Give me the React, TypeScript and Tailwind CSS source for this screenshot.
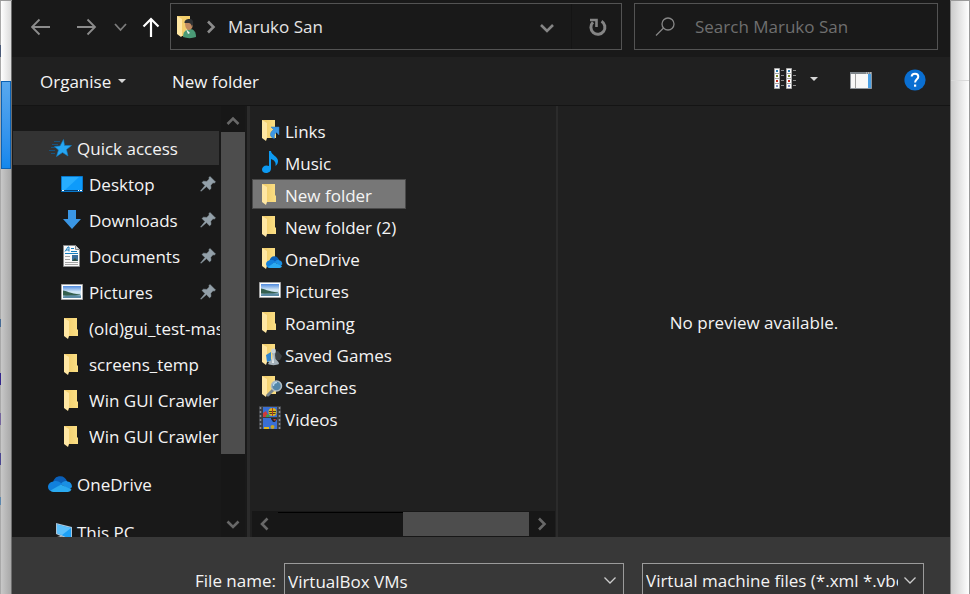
import { useId, type ReactNode } from "react";

const FONT = "font-['Open_Sans','Noto_Sans',sans-serif]";

function Glyph({ children }: { children: ReactNode }) {
  return (
    <svg viewBox="0 0 24 24" className="h-6 w-6 shrink-0 overflow-visible" aria-hidden="true">
      {children}
    </svg>
  );
}

function FolderShape() {
  const id = useId();
  return (
    <>
      <defs>
        <linearGradient id={id} x1="0" y1="0" x2="1" y2="0">
          <stop offset="0" stopColor="#f0cb68" />
          <stop offset="1" stopColor="#fbdf85" />
        </linearGradient>
      </defs>
      <path d="M4 2h13v11l1 1v6H7z" fill={`url(#${id})`} />
      <path d="M4 2l5 3v15l-1 3-4-3z" fill="#ffe7a3" />
    </>
  );
}

function CloudShape() {
  return (
    <>
      <path d="M5 10.500C6 6 9 4 12.500 4.200c3 0 5.500 2 6.500 5L13 14z" fill="#0a5fb8" />
      <path d="M5.500 9.500c3-1 6 0 8.500 2.500L4 19.500a5 5 0 0 1-4-4.500c0-3 2.500-5.300 5.500-5.500z" fill="#1180dc" />
      <path d="M13 12c2-3 5-3.500 6.500-2.500 3 .3 4.500 2.500 4.500 5.500l-3 3z" fill="#1a8fe3" />
      <path d="M2.500 18.500L13 12.500l10.500 5A4 4 0 0 1 20 20H5.500c-1 0-2-.5-3-1.500z" fill="#2aaaf0" />
    </>
  );
}

const StarIcon = () => (
  <Glyph>
    <path d="M6 5.500h6M4 8.500h6M3 11.500h6M1 14.500h6M3 17.500h4" stroke="#17527c" strokeWidth="1" />
    <path d="M15.500 3.500l1 6h7l-5 4 1.500 6.500-5.500-3.500-6 4 2-6.500-4-3.500 5.500-.5z" fill="#27a6f2" stroke="#0f7fc8" strokeWidth=".6" />
  </Glyph>
);
const DesktopIcon = () => (
  <Glyph>
    <path d="M1.500 4.500h21v15h-21z" fill="#0e9bfb" stroke="#0878cc" />
    <path d="M2 5h17L5 18H2z" fill="#27adff" />
    <path d="M1 18.500h22" stroke="#053f70" />
    <path d="M2 18.500h2M18 18.500h1M20 18.500h2" stroke="#fff" />
  </Glyph>
);
const DownloadIcon = () => (
  <Glyph>
    <path d="M8 2h8v9h5l-9 10-9-10h5z" fill="#3a96e4" />
  </Glyph>
);
const DocumentIcon = () => (
  <Glyph>
    <path d="M3.500 1.500h12l4 4v17h-16z" fill="#fafafa" stroke="#8a8a8a" />
    <path d="M15.500 1.500v4h4" fill="#ddd" stroke="#8a8a8a" />
    <path d="M5 7.500l3-4.500h1v4.500M6 6h3M11 4.500h3M11 7.500h6M5 9.500h13" stroke="#187fc0" fill="none" />
    <path d="M5 12.500h5M5 15.500h5M5 18.500h13M5 20.500h13" stroke="#a4a4a4" />
    <path d="M12 11h6v6h-6z" fill="#3b6f9c" />
    <path d="M12 17l3-3 3 3z" fill="#2f5244" />
  </Glyph>
);

function PictureIcon() {
  const id = useId();
  return (
    <Glyph>
      <defs>
        <linearGradient id={id} x1="0" y1="0" x2="0" y2="1">
          <stop offset="0" stopColor="#4f8ade" />
          <stop offset=".5" stopColor="#d9ecf8" />
          <stop offset="1" stopColor="#8fb6cc" />
        </linearGradient>
      </defs>
      <path d="M1.500 4.500h21v15h-21z" fill="#fff" stroke="#a5a5a5" />
      <path d="M3 6h18v12H3z" fill={`url(#${id})`} />
      <path d="M3 10.500c3 0 7 3 17 4v.5c-6 1-11 1-17 .5z" fill="#35604f" />
      <path d="M3 16.500c6-1.500 12-1 18-1V18H3z" fill="#5a8aa4" />
    </Glyph>
  );
}

const FolderIcon = () => (
  <Glyph>
    <FolderShape />
  </Glyph>
);
const CloudIcon = () => (
  <Glyph>
    <CloudShape />
  </Glyph>
);
const PcIcon = () => (
  <Glyph>
    <path d="M8 3l16 4v14L8 14z" fill="#a9c4d8" />
    <path d="M9 4.500l14 3.500v11.500L9 13z" fill="#1da0f6" />
    <path d="M9 4.500l14 3.500-9 7-5-2z" fill="#5cc0fb" />
    <path d="M5 18l8-2 7 4-8 2z" fill="#c4c8ca" />
  </Glyph>
);
const LinksIcon = () => (
  <Glyph>
    <FolderShape />
    <path d="M13 9h8v8l-2.500-2.500c-2 1-2.500 3-2 6-1-.2-3.500-1-4-3-.5-2.500 1-4.500 3-6z" fill="#3c97e4" stroke="#2a79c4" strokeWidth=".5" />
  </Glyph>
);
const MusicIcon = () => (
  <Glyph>
    <path d="M11 1h2c0 4 7 5 7 10 0 2-1 4-2.500 5 .8-4-1.500-6-4.500-7v9.500c0 3-2.500 4.500-5 4.500S4 21.500 4 19.500s2-4 4.500-4c1 0 2 .2 2.500.5z" fill="#0d9af2" />
  </Glyph>
);
const OneDriveFolderIcon = () => (
  <Glyph>
    <FolderShape />
    <g transform="translate(8 7) scale(.68 .75)">
      <CloudShape />
    </g>
  </Glyph>
);
const GamesIcon = () => (
  <Glyph>
    <FolderShape />
    <path d="M8 13l5-3v9l-4 1z" fill="#2f86d0" />
    <path d="M16 10l4-1 4 5-2 4-5 1z" fill="#3c4043" />
    <path d="M10 22l1-2 3-3 .5-4-1-3.500h4l-.5 3.500.5 4 3 3 .5 2c-3 1.500-8 1.500-11 0z" fill="#a3b0b9" />
    <circle cx="15.500" cy="9" r="2.400" fill="#c9d3d9" />
    <path d="M15 12l-1 9h2z" fill="#e4eaee" />
  </Glyph>
);
const SearchFolderIcon = () => (
  <Glyph>
    <FolderShape />
    <path d="M15 16l-5 5" stroke="#75828c" strokeWidth="3" strokeLinecap="round" />
    <circle cx="18.500" cy="12" r="5" fill="#5587a8" stroke="#aebac2" strokeWidth="1.500" />
    <path d="M15.500 12a3 3 0 0 1 3.500-3.500" stroke="#b9d9ee" fill="none" strokeWidth="1.500" />
  </Glyph>
);
const VideoIcon = () => (
  <Glyph>
    <path d="M1 0h22v23H1z" fill="#3c3e42" />
    <path d="M2.500 1v22M21.500 1v22" stroke="#8b8e92" strokeWidth="1.500" strokeDasharray="2 2" />
    <path d="M5 1h14v10H5zM5 12h14v11H5z" fill="#3a6fd4" />
    <path d="M5 7l3-2 3 6H5z" fill="#cf3b3b" />
    <path d="M8 9l4-1-1 3H8z" fill="#3f9a4c" />
    <circle cx="14.500" cy="6" r="4" fill="#dcb51e" />
    <path d="M11 5.500h7M11.500 7.500h6" stroke="#4a4020" />
    <path d="M14.500 2v8" stroke="#b23a20" />
    <path d="M13 12h6v1l-2 3h-2l-2-3z" fill="#26262a" />
    <path d="M15 13h3l-1 2z" fill="#d6382a" />
    <path d="M6 21h5v2H6z" fill="#e2b81c" />
    <circle cx="14.500" cy="21" r="2" fill="#c9a623" />
  </Glyph>
);
const UserFolderIcon = () => (
  <Glyph>
    <path d="M2 1h13v20H6z" fill="#f3ce6c" />
    <path d="M2 1l5 3v17l-1 1-4-3z" fill="#ffe7a3" />
    <path d="M8 22c0-5 3-8 7-8s6 3 6 8c-4 1.500-9 1.500-13 0z" fill="#4a9a76" />
    <path d="M11 14l4 4-2 1z" fill="#eef2ee" />
    <path d="M10 7c0 5 1 7.500 4 8 3-.5 4-3 4-7z" fill="#c08a60" />
    <path d="M9.500 8c0-3 2-4 5-4 3 0 4 2 3.500 5.500L17 12c-.5-2-1-3.500-3-4z" fill="#2f3133" />
  </Glyph>
);

const PinIcon = () => (
  <svg viewBox="0 0 16 16" className="h-4 w-4 shrink-0" aria-label="Pinned">
    <path d="M10 .5L15.500 6l-1.200 1-1.300-.2-2.300 2.400.3 3.300-1.500 1.300-3-3.200L1 15.300.6 15l4.400-5.500-3-3 1.500-1.300 3.300.2L9.200 3 9 1.500z" fill="#93a0a9" stroke="#93a0a9" strokeWidth=".5" />
  </svg>
);

function Chevron({ dir, thin = false }: { dir: "up" | "down" | "left" | "right"; thin?: boolean }) {
  const d = {
    up: "M2.500 11L8 5.500 13.500 11",
    down: "M2.500 5.500L8 11l5.500-5.500",
    left: "M10.500 2.500L5 8l5.500 5.500",
    right: "M5 2.500L10.500 8 5 13.500",
  }[dir];
  return (
    <svg viewBox="0 0 16 16" className="h-4 w-4 shrink-0" aria-hidden="true">
      <path d={d} fill="none" stroke="currentColor" strokeWidth={thin ? 1.3 : 2.6} />
    </svg>
  );
}

const pinned = [
  { name: "Desktop", icon: <DesktopIcon />, pin: true },
  { name: "Downloads", icon: <DownloadIcon />, pin: true },
  { name: "Documents", icon: <DocumentIcon />, pin: true },
  { name: "Pictures", icon: <PictureIcon />, pin: true },
  { name: "(old)gui_test-master", icon: <FolderIcon />, pin: false },
  { name: "screens_temp", icon: <FolderIcon />, pin: false },
  { name: "Win GUI Crawler", icon: <FolderIcon />, pin: false },
  { name: "Win GUI Crawler", icon: <FolderIcon />, pin: false },
];

const files = [
  { name: "Links", icon: <LinksIcon /> },
  { name: "Music", icon: <MusicIcon /> },
  { name: "New folder", icon: <FolderIcon />, selected: true },
  { name: "New folder (2)", icon: <FolderIcon /> },
  { name: "OneDrive", icon: <OneDriveFolderIcon /> },
  { name: "Pictures", icon: <PictureIcon /> },
  { name: "Roaming", icon: <FolderIcon /> },
  { name: "Saved Games", icon: <GamesIcon /> },
  { name: "Searches", icon: <SearchFolderIcon /> },
  { name: "Videos", icon: <VideoIcon /> },
];

function NavigationBar() {
  const navButton = "flex h-[46px] items-center justify-center";
  return (
    <header className="flex h-[57px] shrink-0 items-start bg-[#191919] pt-[3px] pr-3 pl-[6px]">
      <button type="button" aria-label="Back" className={`${navButton} w-[46px] text-[#8c8c8c]`}>
        <svg viewBox="0 0 20 20" className="h-5 w-5"><path d="M19 11H1M8.500 3.500L1 11l7.500 7.500" fill="none" stroke="currentColor" strokeWidth="1.800" /></svg>
      </button>
      <button type="button" aria-label="Forward" className={`${navButton} w-[46px] text-[#8c8c8c]`}>
        <svg viewBox="0 0 20 20" className="h-5 w-5"><path d="M0 11h18M10.500 3.500L18 11l-7.500 7.500" fill="none" stroke="currentColor" strokeWidth="1.800" /></svg>
      </button>
      <button type="button" aria-label="Recent locations" className={`${navButton} w-[22px] text-[#7c7c7c]`}>
        <svg viewBox="0 0 16 16" className="h-4 w-4"><path d="M2 6l5.500 6L13 6" fill="none" stroke="currentColor" strokeWidth="1.800" /></svg>
      </button>
      <button type="button" aria-label="Up" className={`${navButton} w-[38px] text-white`}>
        <svg viewBox="0 0 20 22" className="h-[22px] w-5"><path d="M10 22V4M2.500 11.500L10 4l7.500 7.500" fill="none" stroke="currentColor" strokeWidth="2.200" /></svg>
      </button>
      <div className="flex h-[47px] min-w-0 flex-1 items-center border border-[#535353] text-[#e4e4e4]">
        <span className="pl-1"><UserFolderIcon /></span>
        <span className="pl-1 text-[#8c8c8c]"><Chevron dir="right" /></span>
        <button type="button" className="pl-[9px] text-[17px] leading-6">Maruko San</button>
        <button type="button" aria-label="Previous locations" className="ml-auto flex h-full w-[50px] items-center justify-center text-[#858585]">
          <svg viewBox="0 0 16 16" className="h-4 w-4"><path d="M3 6l6 6 6-6" fill="none" stroke="currentColor" strokeWidth="2.600" /></svg>
        </button>
        <button type="button" aria-label="Refresh" className="flex h-full w-[50px] items-center justify-center border-l border-[#141414] text-[#858585]">
          <svg viewBox="0 0 20 20" className="h-5 w-5">
            <path d="M14.500 4.300a7 7 0 1 1-8.500 1" fill="none" stroke="currentColor" strokeWidth="3" />
            <path d="M3 3h6.500v7" fill="none" stroke="currentColor" strokeWidth="2.600" />
          </svg>
        </button>
      </div>
      <div className="ml-3 flex h-[47px] w-[304px] shrink-0 items-center border border-[#535353] pl-5">
        <svg viewBox="0 0 20 20" className="h-5 w-5 shrink-0" aria-hidden="true">
          <circle cx="13" cy="7" r="6" fill="none" stroke="#878787" strokeWidth="1.300" />
          <path d="M8.500 11L1 18.500" stroke="#878787" strokeWidth="1.300" />
        </svg>
        <input type="search" aria-label="Search" placeholder="Search Maruko San" className="ml-5 w-full min-w-0 bg-transparent pt-px text-[17px] leading-6 text-white outline-none placeholder:text-[#6f6f6f]" />
      </div>
    </header>
  );
}

function ViewIcon() {
  const rows = [0, 5, 10, 15];
  const dots = ["#2f7fae", "#7c8a2c", "#c03020", "#7d8ec0"];
  return (
    <svg viewBox="0 0 24 22" className="h-[22px] w-6" aria-hidden="true">
      {[0, 12].map((x) => (
        <g key={x}>
          {rows.map((y, i) => (
            <g key={y}>
              <path d={`M${x + 0.5} ${y + 0.5}h5v5h-5z`} fill="#fff" stroke="#a8a8a8" />
              <path d={`M${x + 2} ${y + 2}h2v2h-2z`} fill={dots[i]} />
              <path d={`M${x + 7} ${y + 2.5}h3`} stroke="#8b8b8b" />
            </g>
          ))}
        </g>
      ))}
    </svg>
  );
}

function Caret() {
  return (
    <svg viewBox="0 0 8 4" className="h-1 w-2" aria-hidden="true">
      <path d="M0 0h8L4 4z" fill="#d6d6d6" />
    </svg>
  );
}

function Toolbar() {
  return (
    <div className="flex h-[49px] shrink-0 items-center border-b border-[#141414] bg-[#202020] pr-6 pl-7 text-[17px] leading-6 text-[#f4f4f4]">
      <button type="button" className="flex w-[132px] items-center gap-[7px]"><span className="pt-[2px]">Organise</span> <Caret /></button>
      <button type="button" className="pt-[2px]">New folder</button>
      <button type="button" aria-label="Change view" className="mb-1 ml-auto"><ViewIcon /></button>
      <button type="button" aria-label="More view options" className="mb-1 ml-3 flex h-6 items-center"><Caret /></button>
      <button type="button" aria-label="Show the preview pane" className="ml-8">
        <svg viewBox="0 0 22 18" className="h-[18px] w-[22px]" aria-hidden="true">
          <path d="M.5.5h21v16H.5z" fill="#f8f8f8" stroke="#8f959b" />
          <path d="M0 1h22" stroke="#7f868c" strokeWidth="2" />
          <path d="M16 1h1M18 1h1M20 1h1" stroke="#e0e0e0" />
          <path d="M5.500 2v14" stroke="#a0a0a0" />
          <path d="M18 2h3v14h-3z" fill="#4ba0e4" />
        </svg>
      </button>
      <button type="button" aria-label="Help" className="mb-[2px] ml-8">
        <svg viewBox="0 0 22 22" className="h-[22px] w-[22px]" aria-hidden="true">
          <circle cx="11" cy="11" r="10.600" fill="#0a6fd2" />
          <path d="M7.700 7.500c0-2 1.500-2.800 3.300-2.800s3.300 1 3.300 3c0 2.500-3.200 2.700-3.200 5.800" fill="none" stroke="#fff" strokeWidth="2" />
          <path d="M10 15.500h2.200v2.200H10z" fill="#fff" />
        </svg>
      </button>
    </div>
  );
}

function Sidebar() {
  const row = "flex w-full items-center gap-[5px] whitespace-nowrap text-left";
  return (
    <div className="flex w-[238px] shrink-0 border-r-3 border-[#2b2b2b] bg-[#191919]">
      <nav className="min-w-0 flex-1 overflow-hidden pt-6 pr-px">
        <button type="button" className={`${row} my-px ml-px h-[34px] max-w-[206px] bg-[#333333] pl-[35px]`}>
          <StarIcon />
          <span className="pt-[2px]">Quick access</span>
        </button>
        {pinned.map((p, i) => (
          <button type="button" key={i} className={`${row} h-9 pl-12`}>
            {p.icon}
            <span className="min-w-0 flex-1 overflow-hidden pt-[2px]">{p.name}</span>
            {p.pin && <span className="pr-1"><PinIcon /></span>}
          </button>
        ))}
        <button type="button" className={`${row} mt-3 h-9 pl-9`}>
          <CloudIcon />
          <span className="pt-[2px]">OneDrive</span>
        </button>
        <button type="button" className={`${row} mt-3 h-9 pl-9`}>
          <PcIcon />
          <span className="pt-[2px]">This PC</span>
        </button>
      </nav>
      <div className="mr-[2px] flex w-6 flex-col items-center bg-[#171717] text-[#686868]">
        <button type="button" aria-label="Scroll up" className="flex h-[26px] shrink-0 items-center pt-1"><Chevron dir="up" /></button>
        <div className="h-[322px] w-full bg-[#4d4d4d]" />
        <button type="button" aria-label="Scroll down" className="mt-auto flex h-[26px] shrink-0 items-center"><Chevron dir="down" /></button>
      </div>
    </div>
  );
}

function FileList() {
  return (
    <div className="flex w-[308px] shrink-0 flex-col border-r-2 border-[#2b2b2b]">
      <ul className="min-h-0 flex-1 overflow-hidden px-[2px] pt-2">
        {files.map((f) => (
          <li key={f.name} className="flex h-8 items-center">
            <button
              type="button"
              className={`flex h-[30px] w-[154px] items-center gap-[3px] border text-left whitespace-nowrap ${f.selected ? "border-[#4a4a4a] bg-[#777777]" : "border-transparent"} pl-[5px]`}
            >
              {f.icon}
              <span className="pt-1">{f.name}</span>
            </button>
          </li>
        ))}
      </ul>
      <div className="mr-px ml-[2px] flex h-[26px] shrink-0 items-center bg-[#171717] text-[#686868]">
        <button type="button" aria-label="Scroll left" className="flex w-[26px] justify-center"><Chevron dir="left" /></button>
        <div className="h-6 flex-1 border-t border-black" />
        <div className="h-6 w-[126px] bg-[#4d4d4d]" />
        <button type="button" aria-label="Scroll right" className="flex w-[26px] justify-center"><Chevron dir="right" /></button>
      </div>
    </div>
  );
}

function Footer() {
  return (
    <footer className="flex h-[57px] shrink-0 items-start overflow-hidden bg-[#383838] pt-[26px] pr-[26px] text-[17px] leading-6 text-[#f4f4f4]">
      <label htmlFor="file-name" className="w-[272px] shrink-0 pt-[6px] pr-2 text-right whitespace-nowrap">File name:</label>
      <div className="flex h-[38px] min-w-0 flex-1 items-start border border-[#9b9b9b]">
        <input id="file-name" type="text" defaultValue="VirtualBox VMs" className="h-[34px] min-w-0 flex-1 bg-transparent pl-[3px] outline-none" />
        <button type="button" aria-label="Recent file names" className="mt-2 mr-[5px] text-[#cccccc]"><Chevron dir="down" thin /></button>
      </div>
      <div className="ml-[18px] flex h-[38px] w-[282px] shrink-0 items-start border border-[#9b9b9b] bg-[#333333]">
        <select aria-label="File type" className="h-[34px] w-[255px] appearance-none overflow-hidden bg-transparent pl-[3px] outline-none">
          <option>Virtual machine files (*.xml *.vbox)</option>
        </select>
        <span className="mt-2 mr-[5px] ml-auto text-[#cccccc]"><Chevron dir="down" thin /></span>
      </div>
    </footer>
  );
}

function LeftBackdrop() {
  return (
    <div className="flex w-3 shrink-0 border-t border-[#9a9a9a]" aria-hidden="true">
      <div className="flex w-px flex-col bg-[#a9a9a9]">
        <div className="mt-11 h-3 bg-[#4a5a78]" />
        <div className="mt-[262px] h-2 bg-[#456a94]" />
        <div className="mt-[46px] h-3 bg-[#33258c]" />
        <div className="mt-7 h-3 bg-[#74649c]" />
        <div className="mt-7 h-3 bg-[#4a4590]" />
        <div className="mt-8 h-2 bg-[#5b86ac]" />
      </div>
      <div className="flex flex-1 flex-col border-r border-[#6e6e6e]">
        <div className="h-20 bg-linear-to-r from-white to-[#dcdcdc]" />
        <div className="h-[88px] border border-[#0b62b4] bg-linear-to-b from-[#58a8ee] to-[#1287ec]" />
        <div className="flex-1 bg-linear-to-r from-[#c8c8c8] to-[#a8a8a8]" />
      </div>
    </div>
  );
}

function RightBackdrop() {
  return (
    <div className="flex w-5 shrink-0 border-t border-[#9a9a9a]" aria-hidden="true">
      <div className="flex flex-1 flex-col border-l border-[#858585] bg-linear-to-r from-[#cccccc] to-white">
        <div className="h-20 border-b border-[#dadada]" />
      </div>
      <div className="w-px bg-[#9a9a9a]" />
    </div>
  );
}

export default function App() {
  return (
    <div className={`flex h-screen w-full overflow-hidden ${FONT}`}>
      <LeftBackdrop />
      <main className="flex min-w-0 flex-1 flex-col bg-[#202020]">
        <NavigationBar />
        <Toolbar />
        <div className="flex min-h-0 flex-1 text-[17px] leading-6 text-[#f4f4f4]">
          <Sidebar />
          <FileList />
          <section className="flex min-w-0 flex-1 items-center justify-center">
            <p className="pt-[2px]">No preview available.</p>
          </section>
        </div>
        <Footer />
      </main>
      <RightBackdrop />
    </div>
  );
}
